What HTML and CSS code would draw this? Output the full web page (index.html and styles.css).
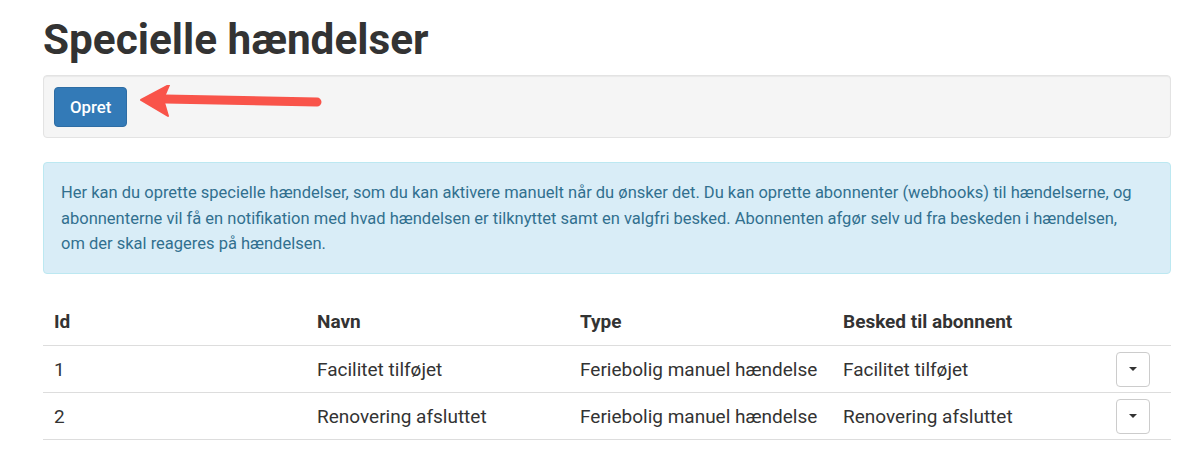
FILE: index.html
```html
<!DOCTYPE html>
<html lang="da">
<head>
<meta charset="utf-8">
<title>Specielle hændelser</title>
<link rel="stylesheet" href="styles.css">
</head>
<body>
<div class="container">
  <h1 class="title">Specielle hændelser</h1>
  <div class="well">
    <button class="btn btn-primary">Opret</button>
    <svg class="arrow" width="190" height="40" viewBox="0 0 190 40">
      <path d="M26 14 L178 17" stroke="#f9544a" stroke-width="9" stroke-linecap="round" fill="none"/>
      <path d="M2 15 L30 0 L24 14 L29 31 Z" fill="#f9544a" stroke="#f9544a" stroke-width="2" stroke-linejoin="round"/>
    </svg>
  </div>
  <div class="alert">
    Her kan du oprette specielle hændelser, som du kan aktivere manuelt når du ønsker det. Du kan oprette abonnenter (webhooks) til hændelserne, og<br>
    abonnenterne vil få en notifikation med hvad hændelsen er tilknyttet samt en valgfri besked. Abonnenten afgør selv ud fra beskeden i hændelsen,<br>
    om der skal reageres på hændelsen.
  </div>
  <table class="table">
    <thead>
      <tr><th class="c">Id</th><th class="c">Navn</th><th class="c">Type</th><th class="c">Besked til abonnent</th><th class="act"></th></tr>
    </thead>
    <tbody>
      <tr><td>1</td><td>Facilitet tilføjet</td><td>Feriebolig manuel hændelse</td><td>Facilitet tilføjet</td><td class="act"><button class="btn-dd"><span class="caret"></span></button></td></tr>
      <tr><td>2</td><td>Renovering afsluttet</td><td>Feriebolig manuel hændelse</td><td>Renovering afsluttet</td><td class="act"><button class="btn-dd"><span class="caret"></span></button></td></tr>
    </tbody>
  </table>
</div>
</body>
</html>
```
FILE: styles.css
```css
* { box-sizing: border-box; }
html, body { margin: 0; padding: 0; background: #fff; }
body {
  font-family: Roboto, "Liberation Sans", Arial, sans-serif;
  color: #333;
}
.container {
  width: 1128px;
  margin-left: 43px;
}
.title {
  font-size: 42.3px;
  font-weight: 700;
  line-height: 50px;
  margin: 15px 0 10px 0;
  color: #333;
}
.well {
  position: relative;
  background: #f5f5f5;
  border: 1px solid #e3e3e3;
  border-radius: 4px;
  padding: 11px 10px 10px;
  box-shadow: inset 0 1px 1px rgba(0,0,0,0.05);
}
.btn {
  font-family: inherit;
  font-size: 16.8px;
  font-weight: 500;
  height: 40px;
  padding: 0 15px;
  border-radius: 4px;
  cursor: pointer;
  display: block;
}
.btn-primary {
  background: #337ab7;
  border: 1px solid #2e6da4;
  color: #fff;
}
.arrow {
  position: absolute;
  left: 95px;
  top: 9px;
}
.alert {
  margin-top: 24px;
  background: #d9edf7;
  border: 1px solid #bce8f1;
  border-radius: 4px;
  color: #31708f;
  padding: 17px 17px 16px;
  font-size: 16.5px;
  line-height: 25.5px;
  white-space: nowrap;
  overflow: hidden;
}
.table {
  width: 100%;
  margin-top: 25px;
  border-collapse: collapse;
  font-size: 19px;
}
.table th, .table td {
  text-align: left;
  height: 47px;
  padding: 0 11px;
  vertical-align: middle;
  white-space: nowrap;
}
.table th { font-weight: 700; }
.table td { border-top: 1px solid #ddd; }
.table tbody tr:last-child td { border-bottom: 1px solid #ddd; }
.table th.c { width: 263px; }
.table tbody td:nth-child(-n+4) { width: 263px; }
.table .act { text-align: center; padding: 0; }
.btn-dd {
  width: 34px;
  height: 35px;
  background: #fff;
  border: 1px solid #ccc;
  border-radius: 4px;
  display: inline-flex;
  align-items: center;
  justify-content: center;
  padding: 0;
  vertical-align: middle;
}
.caret {
  width: 0;
  height: 0;
  border-left: 4px solid transparent;
  border-right: 4px solid transparent;
  border-top: 4px solid #333;
}
```
